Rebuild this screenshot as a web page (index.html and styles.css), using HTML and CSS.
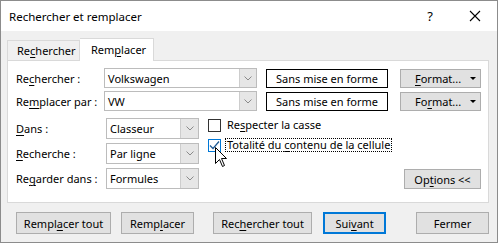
FILE: index.html
```html
<!DOCTYPE html>
<html lang="fr">
<head>
<meta charset="utf-8">
<link rel="stylesheet" href="styles.css">
</head>
<body>
<div class="window">
  <div class="titlebar">
    <span class="title">Rechercher et remplacer</span>
    <span class="help">?</span>
    <span class="close"><svg width="12" height="12" viewBox="0 0 12 12"><path d="M1 1L11 11M11 1L1 11" stroke="#000" stroke-width="1.1" fill="none"/></svg></span>
  </div>
  <div class="body">
    <div class="tabs">
      <div class="tab">Re<u>c</u>hercher</div>
      <div class="tab active">Rem<u>p</u>lacer</div>
    </div>
    <div class="panel">
      <div class="row">
        <span class="label">Re<u>c</u>hercher :</span>
        <div class="combo wide"><span class="val">Volkswagen</span><span class="arrow"><svg width="8" height="5" viewBox="0 0 8 5"><path d="M0.5 0.5L4 4L7.5 0.5" stroke="#8a8a8a" fill="none"/></svg></span></div>
        <div class="preview">Sans mise en forme</div>
        <button class="btn format"><span><u>F</u>ormat...</span><span class="tri"></span></button>
      </div>
      <div class="row">
        <span class="label">Re<u>m</u>placer par :</span>
        <div class="combo wide"><span class="val">VW</span><span class="arrow"><svg width="8" height="5" viewBox="0 0 8 5"><path d="M0.5 0.5L4 4L7.5 0.5" stroke="#8a8a8a" fill="none"/></svg></span></div>
        <div class="preview">Sans mise en forme</div>
        <button class="btn format"><span>Fo<u>r</u>mat...</span><span class="tri"></span></button>
      </div>
      <div class="lower">
        <div class="opts">
          <div class="optrow">
            <span class="label2"><u>D</u>ans :</span>
            <div class="combo sel"><span class="val">Classeur</span><span class="arrow"><svg width="8" height="5" viewBox="0 0 8 5"><path d="M0.5 0.5L4 4L7.5 0.5" stroke="#8a8a8a" fill="none"/></svg></span></div>
          </div>
          <div class="optrow">
            <span class="label2"><u>R</u>echerche :</span>
            <div class="combo sel"><span class="val">Par ligne</span><span class="arrow"><svg width="8" height="5" viewBox="0 0 8 5"><path d="M0.5 0.5L4 4L7.5 0.5" stroke="#8a8a8a" fill="none"/></svg></span></div>
          </div>
          <div class="optrow">
            <span class="label2">Re<u>g</u>arder dans :</span>
            <div class="combo sel"><span class="val">Formules</span><span class="arrow"><svg width="8" height="5" viewBox="0 0 8 5"><path d="M0.5 0.5L4 4L7.5 0.5" stroke="#8a8a8a" fill="none"/></svg></span></div>
          </div>
        </div>
        <div class="checks">
          <div class="check"><span class="box"></span><span class="ctext">Re<u>s</u>pecter la casse</span></div>
          <div class="check"><span class="box on"><svg width="11" height="11" viewBox="0 0 11 11"><path d="M1 5.5L4 8.5L10 1.5" stroke="#1f5a94" stroke-width="1.2" fill="none"/></svg></span><span class="ctext focus">Totalité du <u>c</u>ontenu de la cellule</span></div>
          <svg class="cursor" width="13" height="21" viewBox="0 0 13 21"><path d="M0.5 0.5L0.5 16.5L4.5 12.5L7.5 19.5L9.5 18.5L6.5 11.5L11.5 11.5Z" fill="#fff" stroke="#000" stroke-width="1" stroke-linejoin="miter"/></svg>
        </div>
        <button class="btn options">Op<u>t</u>ions &lt;&lt;</button>
      </div>
    </div>
    <div class="buttons">
      <button class="btn b1">Rempl<u>a</u>cer tout</button>
      <button class="btn b2">Remp<u>l</u>acer</button>
      <button class="btn b3">Rec<u>h</u>ercher tout</button>
      <button class="btn b4 default">Sui<u>v</u>ant</button>
      <button class="btn b5">Fermer</button>
    </div>
  </div>
</div>
</body>
</html>
```

FILE: styles.css
```css
* { box-sizing: border-box; }
html, body { margin: 0; padding: 0; }
body {
  font-family: "Noto Sans", "Open Sans", sans-serif;
  font-size: 11px;
  color: #000;
  background: #fff;
}
u { text-decoration: underline; text-underline-offset: 2px; text-decoration-thickness: 1px; }
.window {
  width: 498px;
  height: 243px;
  border: 1px solid #8c8c8c;
  display: flex;
  flex-direction: column;
  overflow: hidden;
}
.titlebar {
  height: 30px;
  background: #fff;
  display: flex;
  align-items: center;
  flex-shrink: 0;
}
.title { padding-left: 8px; font-size: 11.5px; flex: 1; }
.help { width: 14px; font-size: 13px; margin-right: 32px; text-align: center; }
.close { width: 12px; height: 12px; display: flex; margin-right: 16px; }
.body {
  flex: 1;
  background: #f0f0f0;
  display: flex;
  flex-direction: column;
}
.tabs {
  display: flex;
  align-items: flex-end;
  height: 29px;
  padding-left: 6px;
  position: relative;
  z-index: 1;
}
.tab {
  height: 20px;
  width: 73px;
  border: 1px solid #d9d9d9;
  border-bottom: none;
  background: #f0f0f0;
  padding: 2px 0 0 9px;
}
.tab.active {
  height: 23px;
  width: 74px;
  background: #fff;
  margin-bottom: -1px;
  padding: 3px 0 0 11px;
  border-left: none;
}
.panel {
  margin-left: 6px;
  width: 482px;
  height: 143px;
  background: #fff;
  border: 1px solid #d9d9d9;
  padding: 7px 0 0 8px;
}
.row {
  display: flex;
  align-items: center;
  height: 20px;
  margin-bottom: 3px;
}
.label { width: 88px; }
.combo {
  height: 20px;
  border: 1px solid #bcbcbc;
  background: #fff;
  display: flex;
  align-items: center;
}
.combo .val { flex: 1; padding-left: 3px; white-space: nowrap; }
.combo .arrow {
  width: 17px;
  height: 100%;
  background: #e6e6e6;
  border-left: 1px solid #cdcdcd;
  display: flex;
  align-items: center;
  justify-content: center;
}
.combo.wide { width: 153px; }
.preview {
  margin-left: 9px;
  width: 122px;
  height: 19px;
  border: 1px solid #000;
  display: flex;
  align-items: center;
  justify-content: center;
}
.btn {
  font-family: inherit;
  font-size: inherit;
  color: #000;
  background: #e1e1e1;
  border: 1px solid #adadad;
  padding: 0;
  margin: 0;
  height: 21px;
  display: flex;
  align-items: center;
  justify-content: center;
}
.format {
  margin-left: 12px;
  width: 81px;
  height: 19px;
  justify-content: flex-start;
  padding-left: 14px;
}
.format .tri {
  margin-left: auto;
  margin-right: 4px;
  width: 0;
  height: 0;
  border-left: 3px solid transparent;
  border-right: 3px solid transparent;
  border-top: 3px solid #000;
}
.lower {
  display: flex;
  margin-top: 7px;
  padding-right: 7px;
}
.opts { display: flex; flex-direction: column; gap: 4px; }
.optrow { display: flex; align-items: center; height: 21px; }
.label2 { width: 90px; }
.combo.sel { width: 93px; height: 21px; }
.combo.sel .arrow { width: 18px; }
.checks {
  margin-left: 9px;
  position: relative;
  display: flex;
  flex-direction: column;
  gap: 6px;
}
.check { display: flex; align-items: center; height: 14px; }
.box {
  width: 13px;
  height: 13px;
  border: 1px solid #333;
  background: #fff;
  display: flex;
  align-items: center;
  justify-content: center;
}
.box.on { border-color: #0078d7; }
.ctext { margin-left: 4px; padding: 0 1px; border: 1px dotted transparent; line-height: 12px; }
.ctext.focus { border-color: #000; }
.cursor { position: absolute; left: 7px; top: 29px; }
.options {
  margin-left: auto;
  align-self: flex-end;
  width: 77px;
  height: 20px;
}
.buttons {
  display: flex;
  margin-top: 9px;
  padding-left: 15px;
}
.buttons .btn { height: 22px; }
.b1 { width: 95px; }
.b2 { width: 73px; margin-left: 10px; }
.b3 { width: 99px; margin-left: 19px; }
.b4 { width: 63px; margin-left: 11px; }
.b5 { width: 73px; margin-left: 30px; }
.default { border: 2px solid #0078d7; }
```
